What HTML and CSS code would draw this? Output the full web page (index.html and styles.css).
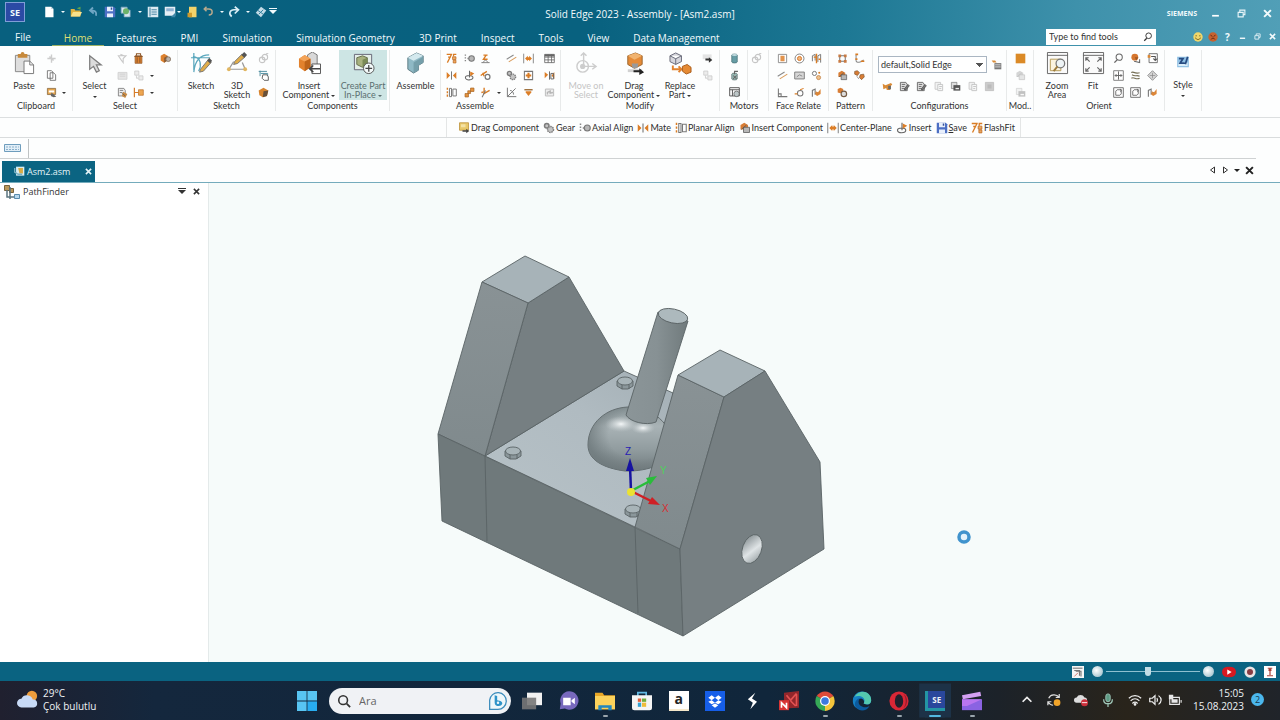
FILE: index.html
```html
<!DOCTYPE html>
<html lang="en">
<head>
<meta charset="utf-8">
<meta name="viewport" content="width=device-width, initial-scale=1">
<title>Solid Edge 2023 - Assembly - [Asm2.asm]</title>
<link rel="stylesheet" href="styles.css">
</head>
<body>
<svg class="sprite" aria-hidden="true">
  <!-- window and quick access -->
  <symbol id="new" viewBox="0 0 16 16"><path fill="#fff" d="M3 1h8l3 3v11H3z"/><path fill="#b9cdd8" d="M11 1v3h3z"/></symbol>
  <symbol id="open" viewBox="0 0 16 16"><path fill="#e2b23e" d="M1 4h5l1 2h7v8H1z"/><path fill="#f8e28c" d="M4 8h12l-3 6H1z"/><path fill="#63a64a" d="M9 3l5-2v4z"/></symbol>
  <symbol id="back" viewBox="0 0 16 16"><path fill="none" stroke="#6fa6c4" stroke-width="2.4" d="M12 13c1-5-1-7-6-7M8 2L4 6l5 4"/></symbol>
  <symbol id="save" viewBox="0 0 16 16"><path fill="#4c6fc4" d="M1 1h12l2 2v12H1z"/><path fill="#e8effb" d="M4 1h8v6H4zM4 10h8v5H4z"/><path fill="#35509c" d="M9 2h2v3H9z"/></symbol>
  <symbol id="copies" viewBox="0 0 16 16"><path fill="#d7e6ef" stroke="#7fa5bd" d="M1.500 1.500h8v8h-8zM5.500 5.500h8v9h-8z"/><circle cx="8" cy="7" r="4" fill="#6db26a"/></symbol>
  <symbol id="list" viewBox="0 0 16 16"><path fill="#dbeaf2" d="M1 1h14v14H1z"/><path stroke="#4d88a5" stroke-width="1.500" fill="none" d="M4 2v12M6 5h7M6 8h7M6 11h7"/></symbol>
  <symbol id="screen" viewBox="0 0 16 16"><path fill="#e5eef5" d="M1 1h14v12H1z"/><path fill="#8fb2d3" d="M3 3h10v4H3z"/><path fill="#3e86a8" d="M9 15l6-6v6z"/></symbol>
  <symbol id="note" viewBox="0 0 16 16"><path fill="#f3d36a" d="M4 1h10v14H4z"/><path fill="#cf9a2b" d="M2 9h6v6H2z"/></symbol>
  <symbol id="undo" viewBox="0 0 16 16"><path fill="none" stroke="#b9a98c" stroke-width="2" d="M3 4h6c6 0 6 8 0 8M6 1L3 4l3 3"/></symbol>
  <symbol id="redo" viewBox="0 0 16 16"><path fill="none" stroke="#d9eef6" stroke-width="2.200" d="M5 14C0 10 3 5 8 5h5M9 1l5 4-5 5"/></symbol>
  <symbol id="layers" viewBox="0 0 16 16"><path fill="#c3dbe6" d="M8 1l7 5-7 9-7-6z"/><path fill="none" stroke="#2f7f9c" stroke-width="1.300" d="M4 6l7 5M11 5l-6 6"/></symbol>
  <symbol id="min" viewBox="0 0 16 16"><path stroke="#fff" stroke-width="3" d="M2 12h12"/></symbol>
  <symbol id="restore" viewBox="0 0 16 16"><path fill="none" stroke="#e6f4f8" stroke-width="2" d="M5 5V2h9v8h-3M2 6h9v8H2z"/></symbol>
  <symbol id="close" viewBox="0 0 16 16"><path stroke="currentColor" stroke-width="3.500" d="M2 2l12 12M14 2L2 14"/></symbol>
  <symbol id="smile" viewBox="0 0 16 16"><circle cx="8" cy="8" r="7.500" fill="#f0d76b"/><path d="M5 5v2M11 5v2M4 9c1 4 7 4 8 0" fill="none" stroke="#6c5a22" stroke-width="1.500"/></symbol>
  <symbol id="frown" viewBox="0 0 16 16"><circle cx="8" cy="8" r="7.500" fill="#c6622f"/><path d="M4 5l3 2M12 5L9 7M5 12c1-3 5-3 6 0" fill="none" stroke="#612a12" stroke-width="1.500"/></symbol>
  <symbol id="find" viewBox="0 0 16 16"><circle cx="9" cy="6" r="4.500" fill="none" stroke="currentColor" stroke-width="1.500"/><path stroke="currentColor" stroke-width="2" d="M6 10l-4 4"/></symbol>
  <!-- large ribbon icons -->
  <symbol id="paste" viewBox="0 0 24 24"><path fill="#dedede" stroke="#888" d="M2.500 3.500h15v17h-15z"/><path fill="#c78a3c" d="M5 2h3a2 2 0 0 1 4 0h3v4H5z"/><path fill="#fff" stroke="#777" d="M11.500 9.500h6l4 4v9h-10z"/><path fill="none" stroke="#777" d="M17.500 9.500v4h4"/></symbol>
  <symbol id="cursor" viewBox="0 0 24 24"><path fill="#dcdcdc" stroke="#7d7d7d" stroke-width="1.300" d="M7 4v14l4-3 3 6 3-1.500-3-6h5z"/></symbol>
  <symbol id="sketch" viewBox="0 0 24 24"><path fill="none" stroke="#5aa7bd" stroke-width="1.300" d="M1 6h20M4 1v18M4 21C5 10 10 3 20 3M3 5c9 0 9 10 6 15"/><path fill="#e0ad4a" stroke="#777" d="M11 18l8-10 3 3-8 9-4 1z"/><path fill="#555" d="M18 9l2-3 3 3-2 3z"/></symbol>
  <symbol id="sketch3" viewBox="0 0 24 24"><path fill="none" stroke="#999" stroke-width="1.300" d="M3 18h17l-3-7M3 18l5-8"/><circle cx="3" cy="18" r="2" fill="#e1b661"/><circle cx="20" cy="18" r="2" fill="#e1b661"/><path fill="#e0ad4a" stroke="#777" d="M9 10l8-8 3 3-8 7-4 1z"/><path fill="#555" d="M16 3l3-3 3 3-3 3z"/></symbol>
  <symbol id="insert-comp" viewBox="0 0 24 24"><path fill="#d8d8d8" stroke="#777" d="M10 3l5-3 5 3v10l-5 3-5-3z"/><path fill="#e2822d" d="M1 7l6-4 6 4v9l-6 4-6-4z"/><path fill="#f4a459" d="M1 7l6-4 6 4-6 3z"/><path fill="#bd6419" d="M7 10l6-3v9l-6 4z"/><path fill="#fff" stroke="#555" d="M14.500 12.500h9v10h-9z"/><path fill="none" stroke="#444" stroke-width="1.500" d="M23 17.500H12M16 14l-4 3.500 4 3.500"/></symbol>
  <symbol id="create" viewBox="0 0 24 24"><path fill="#e5efe9" stroke="#667" d="M2.500 2.500h18v16h-18z"/><path fill="#a8b27f" stroke="#66704d" d="M5 6l6-2 5 2v7l-5 3-6-3z"/><path fill="#7a8a56" d="M11 8l5-2v7l-5 3z"/><circle cx="17.500" cy="17" r="5.500" fill="#f3fafa" stroke="#555"/><path stroke="#444" stroke-width="1.300" d="M14 17h7M17.500 13.500v7"/></symbol>
  <symbol id="assemble" viewBox="0 0 24 24"><path fill="#8fb9c5" stroke="#5d7b84" d="M4 6l9-5 7 3v7l-5 3v5l-5 3-6-4z"/><path fill="#d4e9ee" d="M4 6l9-5 7 3-10 5z"/><path fill="#759faa" d="M10 11l10-6v6l-5 3v5l-5 3z"/></symbol>
  <symbol id="move" viewBox="0 0 24 24"><g fill="none" stroke="#cdcdcd" stroke-width="1.500"><path d="M9 1v14h13M6 4l3-3 3 3M18 12l4 3-4 3"/><circle cx="8" cy="15" r="6"/><circle cx="8" cy="15" r="2" fill="#ccc"/></g></symbol>
  <symbol id="drag" viewBox="0 0 24 24"><path fill="#e58b38" stroke="#9a642d" d="M5 4l8-3 7 3v9l-8 4-7-4z"/><path fill="#f1b36f" d="M5 4l8-3 7 3-8 4z"/><path fill="#999" d="M9 12h7l-1 5h-5z"/><path fill="#d1d1d1" d="M5 18h15v3H5z"/><path fill="#222" d="M11 19h6v-2l5 4-5 3v-3h-6z"/></symbol>
  <symbol id="drag-fav" viewBox="0 0 16 16"><path fill="#e8c86a" stroke="#b98d33" d="M2 1h12v10H2z"/><path fill="#f4e2a4" d="M4 3h6v4H4z"/><path fill="#444" d="M6 11h5V9l4 3-4 3v-2H6z"/></symbol>
  <symbol id="replace" viewBox="0 0 24 24"><path fill="#d6d6dc" stroke="#676a78" d="M1 4l6-3 6 3v6l-6 3-6-3zM1 4l6 3 6-3M7 7v6"/><path fill="none" stroke="#e2822d" stroke-width="2" d="M4 14v4h8M10 15l3 3-3 3"/><path fill="#e58a34" stroke="#a85d1c" d="M14 15l5-2 4 3v5l-5 2-4-3z"/></symbol>
  <symbol id="zoomarea" viewBox="0 0 24 24"><path fill="#fafafa" stroke="#666" d="M1.500.5h21v22h-21zM1 3.500h22"/><path fill="#fbf3df" stroke="#b79b55" d="M4.500 7.500h11v12h-11z"/><circle cx="15" cy="12" r="4.500" fill="#eef4f6" stroke="#777" stroke-width="1.300"/><path stroke="#9d7b3c" stroke-width="2" d="M12 15l-4 5"/></symbol>
  <symbol id="fit" viewBox="0 0 24 24"><path fill="#fafafa" stroke="#666" d="M1.500.5h21v22h-21zM1 3.500h22"/><path fill="none" stroke="#666" stroke-width="1.200" d="M8 10L4 6M4 9V6h3M16 10l4-4M17 6h3v3M8 16l-4 4M4 17v3h3M16 16l4 4M17 20h3v-3"/></symbol>
  <symbol id="style" viewBox="0 0 24 24"><path fill="#8fc0e4" d="M2 3h20v18H2z"/><path fill="#dbeffa" d="M4 13h16v6H4z"/><path fill="none" stroke="#284c82" stroke-width="3" d="M5 6h7l-5 8h8M20 3l-4 13"/></symbol>
  <!-- small ribbon icons -->
  <symbol id="cut" viewBox="0 0 16 16"><path fill="none" stroke="#ccc" stroke-width="2" d="M8 2v12M2 8h12M5 5l6 6"/></symbol>
  <symbol id="copy" viewBox="0 0 16 16"><path fill="#fff" stroke="#666" stroke-width="1.200" d="M2 1h6l2 2v9H2zM6 4h5l3 3v8H6z"/></symbol>
  <symbol id="clip" viewBox="0 0 16 16"><path fill="#e4a54e" stroke="#7b5b33" d="M2 2h12v9H2z"/><path fill="#fff" d="M4 5h8v3H4z"/><path fill="#666" d="M8 8l7 6-4 1-4-2z"/></symbol>
  <symbol id="filter-off" viewBox="0 0 16 16"><path fill="none" stroke="#c9c9c9" stroke-width="1.600" d="M2 4h11L9 8v6L6 10zM5 2l5 2"/></symbol>
  <symbol id="box" viewBox="0 0 16 16"><path fill="#df8330" stroke="#8c572a" d="M3 4h10v11H3z"/><path fill="none" stroke="#8c572a" stroke-width="1.500" d="M5 4V1h6v3M2 5h12M6 6v8M10 6v8"/></symbol>
  <symbol id="parts" viewBox="0 0 16 16"><path fill="#dc812f" d="M1 4l5-3 5 3v7l-5 3-5-3z"/><path fill="#8a5c35" d="M6 7l5-3v7l-5 3z"/><circle cx="12" cy="9" r="3.500" fill="#b9b2aa" stroke="#7a624d"/></symbol>
  <symbol id="off-a" viewBox="0 0 16 16"><path fill="#e6e6e6" stroke="#c9c9c9" d="M1.500 3.500h13v10h-13zM4 6h8M4 9h8"/></symbol>
  <symbol id="off-b" viewBox="0 0 16 16"><path fill="#ececec" stroke="#c5c5c5" d="M2.500 1.500h6v6h-6zM8.500 8.500h6v6h-6zM5 8v4h3"/></symbol>
  <symbol id="doc-hand" viewBox="0 0 16 16"><path fill="#eee" stroke="#777" stroke-width="1.200" d="M2 2h8l2 3v8H2zM4 5h5M4 8h4"/><path fill="#c98b43" d="M9 7l6 3-3 6-5-3z"/><path stroke="#555" d="M7 9l5 4"/></symbol>
  <symbol id="cfg-edit" viewBox="0 0 16 16"><path fill="#ddd" stroke="#666" stroke-width="1.300" d="M2 2h8l2 3v9H2zM4 5h5M4 8h4M4 11h4"/><path fill="#777" stroke="#444" d="M8 11l5-6 2 2-5 6H8z"/></symbol>
  <symbol id="align-l" viewBox="0 0 16 16"><path fill="none" stroke="#d57b28" stroke-width="1.700" d="M2 1v14M2 8h6"/><path fill="#eda651" stroke="#b76b21" d="M8 4h7v8H8z"/></symbol>
  <symbol id="link-off" viewBox="0 0 16 16"><g fill="none" stroke="#c6c6c6" stroke-width="1.600"><circle cx="6" cy="10" r="4"/><circle cx="10" cy="6" r="4"/><path d="M12 1l3-1"/></g></symbol>
  <symbol id="sk-view" viewBox="0 0 16 16"><path fill="none" stroke="#4d8d9f" stroke-width="1.400" d="M1 2h12M3 1v8M4 5h10v8"/><path fill="#fff" stroke="#555" stroke-width="1.300" d="M7 7h6l2 3v5H9l-3-3z"/></symbol>
  <symbol id="sphere" viewBox="0 0 16 16"><path fill="#d6842e" d="M1 5l7-4 7 4-2 8-6 2-5-3z"/><path fill="#66503a" d="M8 6l7-1-2 8-6 2z"/></symbol>
  <symbol id="flash" viewBox="0 0 16 16"><path fill="none" stroke="#d97c24" stroke-width="1.800" d="M1 2h8M8 2L2 14M3 6h4M11 2h4M11 1v4"/><path fill="#efa85f" stroke="#b8651d" d="M9.500 5.500h5v4h-5zM10.500 10.500h4v4h-4z"/></symbol>
  <symbol id="mate" viewBox="0 0 16 16"><path fill="#dc7e27" d="M1 3l5 5-5 5zM15 3l-5 5 5 5z"/><path stroke="#777" stroke-width="1.500" d="M8 2v12"/></symbol>
  <symbol id="planar" viewBox="0 0 16 16"><path stroke="#d97c24" stroke-width="2" stroke-dasharray="3 2" d="M2 1v14"/><path fill="none" stroke="#777" stroke-width="1.400" d="M5 2h3v12H5zM10 3h5v10h-5z"/></symbol>
  <symbol id="axial" viewBox="0 0 16 16"><path stroke="#888" stroke-width="2" stroke-dasharray="2 2" d="M2 2v12M5 8h3"/><circle cx="11" cy="8" r="4" fill="#b7b7b7" stroke="#777" stroke-width="1.500"/></symbol>
  <symbol id="insert" viewBox="0 0 16 16"><path fill="none" stroke="#666" stroke-width="1.500" d="M8 1v10M2 11c0-4 11-4 11 0s-11 5-11 0"/><path fill="#dc7e27" d="M9 2l6 3-6 4z"/></symbol>
  <symbol id="connect" viewBox="0 0 16 16"><path fill="#e5943f" stroke="#a66524" d="M9.500 1.500h5v5h-5zM1.500 9.500h5v5h-5zM5.500 5.500h4v4h-4z"/></symbol>
  <symbol id="ground" viewBox="0 0 16 16"><path fill="none" stroke="#777" stroke-width="1.300" d="M2 14h12M4 14l4-4 4 4"/><path stroke="#d97c24" stroke-width="2" fill="none" d="M5 3h6M9 3L5 9h6"/></symbol>
  <symbol id="cam" viewBox="0 0 16 16"><path fill="none" stroke="#d97c24" stroke-width="2" d="M1 8l9-6M4 4l2 5"/><circle cx="11" cy="10" r="3.500" fill="#fff" stroke="#777" stroke-width="1.800"/></symbol>
  <symbol id="path" viewBox="0 0 16 16"><path fill="none" stroke="#d97c24" stroke-width="2" d="M6 1v6l-4 1M5 10l9-5"/><path stroke="#777" stroke-width="1.500" d="M3 15l5-10"/></symbol>
  <symbol id="parallel" viewBox="0 0 16 16"><path stroke="#888" stroke-width="1.500" d="M1 9l10-6"/><path stroke="#d99a58" stroke-width="1.500" d="M4 13l11-7"/></symbol>
  <symbol id="gear" viewBox="0 0 16 16"><g fill="#c4c4c4" stroke="#7c7c7c" stroke-width="2"><circle cx="5" cy="5" r="3"/><circle cx="10" cy="10" r="4" stroke-dasharray="2 1"/></g></symbol>
  <symbol id="angle" viewBox="0 0 16 16"><path fill="none" stroke="#777" stroke-width="1.400" d="M2 1v13h13M2 14L14 2M6 5c3 0 5 3 5 6"/></symbol>
  <symbol id="center" viewBox="0 0 16 16"><path fill="none" stroke="#888" stroke-width="1.400" d="M1 1v14M15 1v14"/><path fill="#dc7e27" d="M3 8l4-4v2h2V4l4 4-4 4v-2H7v2z"/></symbol>
  <symbol id="rigid" viewBox="0 0 16 16"><path fill="#fff" stroke="#777" stroke-width="1.500" d="M2 2h12v12H2z"/><path stroke="#d97c24" stroke-width="3" d="M8 4v8M4 8h8"/></symbol>
  <symbol id="tangent" viewBox="0 0 16 16"><path stroke="#9a6a35" stroke-width="2" d="M2 4h12"/><path fill="#dc7e27" d="M4 6h8v2l-4 5-4-5z"/></symbol>
  <symbol id="table" viewBox="0 0 16 16"><path fill="#fff" stroke="#666" stroke-width="1.200" d="M1 2h14v12H1zM1 6h14M1 10h14M6 2v12M11 2v12"/><path fill="#666" d="M1 2h14v3H1z"/></symbol>
  <symbol id="mate-doc" viewBox="0 0 16 16"><path fill="#dc7e27" d="M1 3l5 4-5 5zM15 3v10l-4-5z"/><path fill="none" stroke="#666" stroke-width="1.400" d="M8 2v12M10 5h4v8h-4z"/></symbol>
  <symbol id="run-off" viewBox="0 0 16 16"><path fill="#eee" stroke="#bbb" stroke-width="1.400" d="M2 3h12v10H2z"/><path fill="none" stroke="#b5b5b5" stroke-width="2" d="M5 11V8l4-2v3l4-1"/></symbol>
  <symbol id="hide" viewBox="0 0 16 16"><path fill="#e4e4e4" d="M1 2h13v7H1z"/><path fill="#333" d="M5 8h5V6l5 4-5 4v-3H5z"/></symbol>
  <symbol id="motor-a" viewBox="0 0 16 16"><path fill="#679da5" stroke="#416a70" d="M4 3c0-2 8-2 8 0v10c0 2-8 2-8 0z"/><ellipse cx="8" cy="3" rx="4" ry="1.500" fill="#c2dade"/></symbol>
  <symbol id="motor-b" viewBox="0 0 16 16"><path fill="#98bbb6" stroke="#5d6d6d" d="M4 6c0-2 8-2 8 0v7c0 2-8 2-8 0z"/><path fill="none" stroke="#666" stroke-width="1.500" d="M8 6V2h5M6 8l5 5M11 8l-5 5"/></symbol>
  <symbol id="motor-c" viewBox="0 0 16 16"><path fill="#fff" stroke="#555" stroke-width="1.400" d="M1 1h14v12H1zM1 4h14M5 4v9"/><circle cx="11" cy="10" r="4" fill="#bcc6c7" stroke="#555"/></symbol>
  <symbol id="square-r" viewBox="0 0 16 16"><path fill="#fff" stroke="#888" stroke-width="1.300" d="M2 2h12v12H2z"/><path fill="#e2934c" d="M5 4h6v8H5z"/></symbol>
  <symbol id="concentric" viewBox="0 0 16 16"><circle cx="8" cy="8" r="6.500" fill="#fff" stroke="#777" stroke-width="1.300"/><circle cx="8" cy="8" r="3" fill="#efb67d" stroke="#d7782a" stroke-width="1.400"/></symbol>
  <symbol id="sym" viewBox="0 0 16 16"><path fill="none" stroke="#777" stroke-width="1.400" d="M2 12V4l4-2v9M10 13V4l4-2v12"/><path stroke="#d97c24" stroke-width="2" d="M8 1v14M4 6h3M11 9h3"/></symbol>
  <symbol id="coplanar" viewBox="0 0 16 16"><path fill="#d6d6d6" stroke="#777" stroke-width="1.300" d="M1 3h14v10H1z"/><path fill="none" stroke="#888" stroke-width="1.400" d="M4 10l4-3 4 2"/></symbol>
  <symbol id="equal" viewBox="0 0 16 16"><circle cx="5" cy="5" r="3" fill="#fff" stroke="#777" stroke-width="1.400"/><circle cx="11" cy="11" r="3" fill="#efc28e" stroke="#bd7837"/><circle cx="12" cy="4" r="1.500" fill="#d97c24"/></symbol>
  <symbol id="perp" viewBox="0 0 16 16"><path fill="none" stroke="#777" stroke-width="1.500" d="M2 2v12h13M2 10h4v4"/></symbol>
  <symbol id="tan" viewBox="0 0 16 16"><circle cx="9" cy="9" r="4" fill="#fff" stroke="#777" stroke-width="1.500"/><path fill="none" stroke="#d97c24" stroke-width="1.500" d="M1 10h4M9 4l5-2"/></symbol>
  <symbol id="offset" viewBox="0 0 16 16"><path fill="none" stroke="#777" stroke-width="1.600" d="M2 14V5l4-2v7l4-2"/><path fill="#dc8638" d="M7 6l3 2 4-5v7l-5 3-3-2z"/></symbol>
  <symbol id="pattern" viewBox="0 0 16 16"><path fill="none" stroke="#777" stroke-width="1.500" d="M4 4h8v8H4z"/><path fill="#c87a42" d="M2 2h4v4H2zM10 2h4v4h-4zM2 10h4v4H2zM10 10h4v4h-4z"/></symbol>
  <symbol id="along" viewBox="0 0 16 16"><path fill="none" stroke="#888" stroke-width="1.500" d="M3 3v8c0 4 8 3 11-1"/><path fill="none" stroke="#d97c24" stroke-width="2.500" d="M2 2h4M2 9h3M10 12h5"/></symbol>
  <symbol id="mirror" viewBox="0 0 16 16"><path fill="#d87d35" d="M2 4l5-3 5 3v6H2z"/><path fill="#b7b7b7" stroke="#555" d="M6 7h8v7H6z"/><path stroke="#555" d="M3 10l7-6"/></symbol>
  <symbol id="dup" viewBox="0 0 16 16"><path fill="#d87d35" stroke="#80562f" d="M1 2l4-1 3 3-3 4-4-2zM9 7l5-1 1 4-4 4-3-3z"/><path stroke="#777" d="M4 9l3 4"/></symbol>
  <symbol id="adjust" viewBox="0 0 16 16"><path fill="#d87d35" d="M1 3l4-2 4 2v5L5 9 1 8z"/><circle cx="10" cy="10" r="4" fill="#ddd" stroke="#765c45" stroke-width="1.700"/></symbol>
  <symbol id="cfg" viewBox="0 0 16 16"><path fill="#ddd" stroke="#666" stroke-width="1.300" d="M3 2h8v10H3z"/><path fill="#eee" stroke="#555" stroke-width="1.300" d="M7 5h7v9H7zM9 8h4M9 11h3"/></symbol>
  <symbol id="cfg-key" viewBox="0 0 16 16"><path fill="#d98b37" d="M1 4l4 2 8-3 2 2-3 3v5H7l-1-3-4 2z"/><path fill="#666" d="M9 7h4v5H9z"/></symbol>
  <symbol id="cfg-save" viewBox="0 0 16 16"><path fill="#ddd" stroke="#777" d="M2 2h8v9H2z"/><path fill="#555" d="M5 6h10v8H5z"/><path fill="#eee" d="M8 10h5v2H8z"/></symbol>
  <symbol id="cfg-set" viewBox="0 0 16 16"><path fill="#d98b37" d="M1 2h5l2 3H3z"/><path fill="#777" d="M5 6h10v9H5z"/><path stroke="#fff" d="M6 8.500h8M6 11.500h8"/></symbol>
  <symbol id="block" viewBox="0 0 16 16"><path fill="#db8a27" d="M1 1h14v14H1z"/></symbol>
  <symbol id="block-off" viewBox="0 0 16 16"><path fill="#ccc" stroke="#b7b7b7" d="M2 2h12v12H2z"/><path fill="#bbb" d="M5 5h6v6H5z"/></symbol>
  <symbol id="view-a" viewBox="0 0 16 16"><path fill="#fff" stroke="#777" stroke-width="1.300" d="M1 1h14v14H1z"/><path stroke="#666" stroke-width="1.400" fill="none" d="M8 2v12M3 8h10M5 6L3 8l2 2M11 6l2 2-2 2"/></symbol>
  <symbol id="view-b" viewBox="0 0 16 16"><path fill="#fff" stroke="#666" stroke-width="1.300" d="M1 1h14v14H1z"/><path fill="none" stroke="#666" stroke-width="1.300" d="M4 6l2-2h6v6l-2 2H4zM10 3l2 1-1 3"/></symbol>
  <symbol id="spin" viewBox="0 0 16 16"><circle cx="7" cy="6" r="5" fill="#d6762e"/><path fill="#9c5926" d="M7 6h5l-3 5z"/><path fill="none" stroke="#666" stroke-width="1.500" d="M6 12l8 2V9"/></symbol>
  <symbol id="pan" viewBox="0 0 16 16"><path fill="#fff" stroke="#666" stroke-width="1.300" d="M3 1h12v13H3z"/><path fill="#dc8732" d="M1 3h4v4H1z"/><path fill="none" stroke="#555" stroke-width="1.500" d="M6 5h6v6M9 8l3 3 3-3"/></symbol>
  <symbol id="rotate" viewBox="0 0 16 16"><path fill="none" stroke="#766f55" stroke-width="1.700" d="M2 4c2-3 4 2 12 0M3 7c4 3 7 0 11 2M2 12c4-3 6 3 12 0"/></symbol>
  <symbol id="diamond" viewBox="0 0 16 16"><path fill="#d6d6d6" stroke="#8c8c8c" stroke-width="1.300" d="M8 1l7 7-7 7-7-7z"/><path stroke="#888" d="M8 4v8M4 8h8"/></symbol>
  <!-- status bar and taskbar -->
  <symbol id="thermo" viewBox="0 0 16 16"><path fill="#f5f5f5" d="M0 0h16v16H0z"/><path fill="#999" d="M1 2h13v2H1z"/><path fill="none" stroke="#777" stroke-width="1.500" d="M3 6h7v7M12 14V7H5"/><path stroke="#c75444" d="M3 14l5-5"/></symbol>
  <symbol id="play" viewBox="0 0 16 16"><path fill="#d71921" d="M0 8q0-6 8-6t8 6-8 6-8-6z"/><path fill="#fff" d="M6 5l5 3-5 3z"/></symbol>
  <symbol id="record" viewBox="0 0 16 16"><circle cx="8" cy="8" r="7.500" fill="#e9e5e5"/><circle cx="8" cy="8" r="4" fill="#883b42"/></symbol>
  <symbol id="upload" viewBox="0 0 16 16"><path fill="#fff" d="M0 0h16v16H0z"/><path stroke="#a84037" stroke-width="1.600" fill="none" d="M5 3h6M8 12V4M6 6l2-2 2 2M4 13h8"/></symbol>
  <symbol id="weather" viewBox="0 0 24 24"><circle cx="17" cy="8" r="6" fill="#ee9d3c"/><path fill="#c8daf6" d="M5 21a5 5 0 0 1 0-10 7 7 0 0 1 13 1 4.500 4.500 0 0 1 1 9z"/></symbol>
  <symbol id="windows" viewBox="0 0 24 24"><path fill="#58c5f3" d="M0 0h11.500v11.500H0zM12.500 0H24v11.500H12.500zM0 12.500h11.500V24H0z"/><path fill="#28adf0" d="M12.500 12.500H24V24H12.500z"/></symbol>
  <symbol id="bing" viewBox="0 0 24 24"><path fill="#eef7fa" stroke="#3a8bbb" stroke-width="1.500" d="M2 22V11a10 10 0 1 1 10 11z"/><path fill="#2e93c9" d="M8 5l3 1v5l4 1c4 2 2 6-2 6-3 0-5-1-5-4z"/><circle cx="12" cy="14" r="1.500" fill="#eef7fa"/></symbol>
  <symbol id="tasks" viewBox="0 0 24 24"><path fill="#f1f1f1" d="M6 2h18v15H6z"/><path fill="#777" opacity=".9" d="M0 8h17v14H0z"/></symbol>
  <symbol id="meet" viewBox="0 0 24 24"><path fill="#7769bd" d="M1 22l1-7a11 11 0 1 1 5 6z"/><path fill="#fff" d="M5 8h9v9H5zM15 11l4-3v8l-4-3z"/></symbol>
  <symbol id="folder" viewBox="0 0 24 24"><path fill="#e9a727" d="M0 2h9l2 3h13v17H0z"/><path fill="#fcd25b" d="M0 6h24v16H0z"/><path fill="#2386be" d="M4 23v-6h16v6h-4v-3H8v3z"/></symbol>
  <symbol id="store" viewBox="0 0 24 24"><path fill="none" stroke="#62b9e4" stroke-width="2" d="M7 7V2h10v5"/><path fill="#f5f5f5" d="M0 5h24v15q0 3-3 3H3q-3 0-3-3z"/><path fill="#e35c36" d="M7 9h4v4H7z"/><path fill="#70ac3c" d="M12 9h5v4h-5z"/><path fill="#35a3d5" d="M7 14h4v5H7z"/><path fill="#efbc39" d="M12 14h5v5h-5z"/></symbol>
  <symbol id="dropbox" viewBox="0 0 24 24"><path fill="#165ee8" d="M0 0h24v24H0z"/><path fill="#fff" d="M8 5l4 3-4 3-4-3zM16 5l4 3-4 3-4-3zM8 11l4 3 4-3 4 2-4 3-4-2-4 2-4-3zM8 17l4-2 4 2-4 3z"/></symbol>
  <symbol id="bolt" viewBox="0 0 24 24"><path fill="#fff" d="M16 2L7 10l6 4-3 8 8-9-6-4z"/></symbol>
  <symbol id="nitro" viewBox="0 0 24 24"><path fill="#92262b" d="M6 2l18-2v20l-18 1z"/><path stroke="#e35353" stroke-width="2" fill="none" d="M9 5l5 6 7-8M14 12l6 6M21 4v14"/><path fill="#d93434" d="M0 11h12v12H0z"/><path fill="none" stroke="#fff" stroke-width="2" d="M3 20v-6l6 6v-6"/></symbol>
  <symbol id="chrome" viewBox="0 0 24 24"><path fill="#df4b39" d="M12 12L2 6a12 12 0 0 1 20 0z"/><path fill="#f4c53b" d="M12 12l10-6a12 12 0 0 1-10 18z"/><path fill="#36a957" d="M12 12v12A12 12 0 0 1 2 6z"/><circle cx="12" cy="12" r="6" fill="#fff"/><circle cx="12" cy="12" r="4.500" fill="#3b79df"/></symbol>
  <symbol id="edge" viewBox="0 0 24 24"><path fill="#1580c5" d="M1 12a11 11 0 0 1 22-1c0 6-6 6-9 4 1-1 1-5-3-6-4 0-7 7 0 12-7 1-10-4-10-9z"/><path fill="#54c9ae" d="M3 7C9-3 23 0 23 11c0 5-5 6-9 4 4-6-4-11-11-8z"/><path fill="#0c5b9e" d="M8 12c-1 6 7 10 13 6-3 6-11 7-15 3-5-5-2-11 4-13-1 1-2 2-2 4z"/></symbol>
  <symbol id="opera" viewBox="0 0 24 24"><circle cx="12" cy="12" r="11.500" fill="#d92736"/><ellipse cx="12" cy="12" rx="5" ry="8" fill="#20202d"/><path fill="#991c2d" d="M17 3a11 11 0 0 1 0 18c4-5 4-13 0-18z"/></symbol>
  <symbol id="clapper" viewBox="0 0 24 24"><path fill="#d3a0f2" d="M0 5l22-4 1 5-22 4z"/><path fill="#8a63e2" d="M0 10h24v13H0z"/><path fill="#b975ef" d="M0 10h24L6 18H0z"/></symbol>
  <symbol id="chevron" viewBox="0 0 16 16"><path fill="none" stroke="#eee" stroke-width="2" d="M3 10l5-5 5 5"/></symbol>
  <symbol id="sync" viewBox="0 0 16 16"><path fill="none" stroke="#ddd" stroke-width="1.400" d="M2 6c2-5 9-5 12-1M14 1v4h-4M1 14v-4h4M1 10c2 3 4 4 6 4"/><circle cx="11.500" cy="11" r="3.800" fill="#f2a52a"/></symbol>
  <symbol id="cloud" viewBox="0 0 16 16"><path fill="#ddd" d="M3 11a3 3 0 0 1 0-6 5 5 0 0 1 9 0c4 0 4 6 0 6z"/><circle cx="12" cy="11" r="4" fill="#cb303b"/><path stroke="#fff" d="M9 11h6"/></symbol>
  <symbol id="mic" viewBox="0 0 16 16"><rect x="5.500" y="1" width="5" height="9" rx="2.500" fill="#5d9a83" stroke="#a1c9ba"/><path fill="none" stroke="#a1c9ba" stroke-width="1.400" d="M3 7c0 7 10 7 10 0M8 12v4"/></symbol>
  <symbol id="wifi" viewBox="0 0 16 16"><path fill="none" stroke="#eee" stroke-width="1.400" d="M1 6c4-4 10-4 14 0M3 9c3-3 7-3 10 0M5 12c2-2 4-2 6 0"/><circle cx="8" cy="13" r="1.500" fill="#eee"/></symbol>
  <symbol id="sound" viewBox="0 0 16 16"><path fill="none" stroke="#eee" stroke-width="1.400" d="M2 6h3l3-3v10l-3-3H2zM10 6c1 1 1 3 0 4M12 3c4 3 4 7 0 10"/></symbol>
  <symbol id="battery" viewBox="0 0 16 16"><path fill="none" stroke="#e7e7e7" stroke-width="1.300" d="M2 5h11v8H2zM15 8v3"/><path fill="#e7e7e7" d="M4 7h7v4H4zM1 2h5v5H1z"/></symbol>
</svg>

<div class="app">
<header class="head">
  <div class="titlebar">
    <div class="quick">
      <span class="logo">SE</span>
      <button class="qa w26" aria-label="New"><svg><use href="#new"/></svg><i class="caret"></i></button>
      <button class="qa" aria-label="Open"><svg><use href="#open"/></svg></button>
      <button class="qa" aria-label="Back"><svg><use href="#back"/></svg></button>
      <button class="qa" aria-label="Save"><svg><use href="#save"/></svg></button>
      <button class="qa w26" aria-label="Save as"><svg><use href="#copies"/></svg><i class="caret"></i></button>
      <button class="qa" aria-label="Properties"><svg><use href="#list"/></svg></button>
      <button class="qa w26 near" aria-label="Display"><svg><use href="#screen"/></svg><i class="caret"></i></button>
      <button class="qa" aria-label="Notes"><svg><use href="#note"/></svg></button>
      <button class="qa w26" aria-label="Undo"><svg><use href="#undo"/></svg><i class="caret"></i></button>
      <button class="qa w26" aria-label="Redo"><svg><use href="#redo"/></svg><i class="caret"></i></button>
      <button class="qa" aria-label="Update"><svg><use href="#layers"/></svg></button>
      <button class="more" aria-label="Customize"><i class="bar"></i><i class="caret big"></i></button>
    </div>
    <h1>Solid Edge 2023 - Assembly - [Asm2.asm]</h1>
    <div class="winctl">
      <b>SIEMENS</b>
      <button aria-label="Minimize"><svg><use href="#min"/></svg></button>
      <button aria-label="Restore"><svg><use href="#restore"/></svg></button>
      <button aria-label="Close"><svg><use href="#close"/></svg></button>
    </div>
  </div>
  <div class="tabrow">
    <nav class="tabs">
      <button class="file">File</button><button class="on">Home</button><button>Features</button><button>PMI</button><button>Simulation</button><button>Simulation Geometry</button><button>3D Print</button><button>Inspect</button><button>Tools</button><button>View</button><button>Data Management</button>
    </nav>
    <label class="search"><input type="text" placeholder="Type to find tools" aria-label="Type to find tools"><svg><use href="#find"/></svg></label>
    <div class="docctl">
      <button aria-label="Like"><svg class="face"><use href="#smile"/></svg></button>
      <button aria-label="Dislike"><svg class="face"><use href="#frown"/></svg></button>
      <button class="help">?</button>
      <button aria-label="Minimize document"><svg><use href="#min"/></svg></button>
      <button aria-label="Restore document"><svg><use href="#restore"/></svg></button>
      <button aria-label="Close document"><svg><use href="#close"/></svg></button>
    </div>
  </div>
</header>

<section class="ribbon">
  <div class="group clipboard"><div class="body">
    <button class="big"><svg><use href="#paste"/></svg><span>Paste</span></button>
    <div class="small"><svg><use href="#cut"/></svg><svg><use href="#copy"/></svg><svg><use href="#clip"/></svg><i></i><i></i><i class="caret"></i></div>
  </div><h2>Clipboard</h2></div>
  <div class="group select"><div class="body">
    <button class="big"><svg><use href="#cursor"/></svg><span>Select</span><i class="caret"></i></button>
    <div class="small"><svg><use href="#filter-off"/></svg><svg><use href="#off-a"/></svg><svg><use href="#doc-hand"/></svg><svg><use href="#box"/></svg><svg><use href="#off-b"/></svg><svg><use href="#align-l"/></svg><i></i><i class="caret"></i><i class="caret"></i><svg><use href="#parts"/></svg></div>
  </div><h2>Select</h2></div>
  <div class="group sketch"><div class="body">
    <button class="big"><svg><use href="#sketch"/></svg><span>Sketch</span></button>
    <button class="big"><svg><use href="#sketch3"/></svg><span>3D<br>Sketch</span></button>
    <div class="small"><svg><use href="#link-off"/></svg><svg><use href="#sk-view"/></svg><svg><use href="#sphere"/></svg></div>
  </div><h2>Sketch</h2></div>
  <div class="group components"><div class="body">
    <button class="big"><svg><use href="#insert-comp"/></svg><span>Insert<br>Component <i class="caret"></i></span></button>
    <button class="big hot"><svg><use href="#create"/></svg><span>Create Part<br>In-Place <i class="caret"></i></span></button>
  </div><h2>Components</h2></div>
  <div class="group assembly"><div class="body">
    <button class="big"><svg><use href="#assemble"/></svg><span>Assemble</span></button>
    <div class="small split"><svg><use href="#flash"/></svg><svg><use href="#mate"/></svg><svg><use href="#planar"/></svg><svg><use href="#axial"/></svg><svg><use href="#insert"/></svg><svg><use href="#connect"/></svg><svg><use href="#ground"/></svg><svg><use href="#cam"/></svg><svg><use href="#path"/></svg><i></i><i></i><i class="caret"></i><svg><use href="#parallel"/></svg><svg><use href="#gear"/></svg><svg><use href="#angle"/></svg><svg><use href="#center"/></svg><svg><use href="#rigid"/></svg><svg><use href="#tangent"/></svg><svg><use href="#table"/></svg><svg><use href="#mate-doc"/></svg><svg><use href="#run-off"/></svg></div>
  </div><h2>Assemble</h2></div>
  <div class="group modify"><div class="body">
    <button class="big" disabled><svg><use href="#move"/></svg><span>Move on<br>Select</span></button>
    <button class="big"><svg><use href="#drag"/></svg><span>Drag<br>Component <i class="caret"></i></span></button>
    <button class="big"><svg><use href="#replace"/></svg><span>Replace<br>Part <i class="caret"></i></span></button>
    <div class="small"><svg><use href="#hide"/></svg><svg><use href="#off-b"/></svg></div>
  </div><h2>Modify</h2></div>
  <div class="group motors"><div class="body">
    <div class="small"><svg><use href="#motor-a"/></svg><svg><use href="#motor-b"/></svg><svg><use href="#motor-c"/></svg></div>
    <div class="small split"><svg><use href="#link-off"/></svg></div>
  </div><h2>Motors</h2></div>
  <div class="group relate"><div class="body">
    <div class="small"><svg><use href="#square-r"/></svg><svg><use href="#parallel"/></svg><svg><use href="#perp"/></svg><svg><use href="#concentric"/></svg><svg><use href="#coplanar"/></svg><svg><use href="#tan"/></svg><svg><use href="#sym"/></svg><svg><use href="#equal"/></svg><svg><use href="#offset"/></svg></div>
  </div><h2>Face Relate</h2></div>
  <div class="group pattern"><div class="body">
    <div class="small"><svg><use href="#pattern"/></svg><svg><use href="#mirror"/></svg><svg><use href="#adjust"/></svg><svg><use href="#along"/></svg><svg><use href="#dup"/></svg></div>
  </div><h2>Pattern</h2></div>
  <div class="group config"><div class="body">
    <div class="combo"><select aria-label="Configuration"><option>default,Solid Edge</option></select><svg><use href="#cfg-set"/></svg></div>
    <div class="strip"><svg><use href="#cfg-key"/></svg><svg><use href="#cfg-edit"/></svg><svg><use href="#cfg-edit"/></svg><svg class="dim"><use href="#cfg"/></svg><svg><use href="#cfg-save"/></svg><svg class="dim"><use href="#cfg"/></svg><svg><use href="#block-off"/></svg></div>
  </div><h2>Configurations</h2></div>
  <div class="group modes"><div class="body">
    <div class="small"><svg><use href="#block"/></svg><svg class="dim"><use href="#mirror"/></svg><svg class="dim"><use href="#cfg-save"/></svg></div>
  </div><h2>Mod..</h2></div>
  <div class="group orient"><div class="body">
    <button class="big"><svg><use href="#zoomarea"/></svg><span>Zoom<br>Area</span></button>
    <button class="big"><svg><use href="#fit"/></svg><span>Fit</span></button>
    <div class="small"><svg class="ink"><use href="#find"/></svg><svg><use href="#view-a"/></svg><svg><use href="#view-b"/></svg><svg><use href="#spin"/></svg><svg><use href="#rotate"/></svg><svg><use href="#view-b"/></svg><svg><use href="#pan"/></svg><svg><use href="#diamond"/></svg><svg><use href="#offset"/></svg></div>
  </div><h2>Orient</h2></div>
  <div class="group style"><div class="body">
    <button class="big"><svg><use href="#style"/></svg><span>Style</span><i class="caret"></i></button>
  </div></div>
</section>

<div class="favbar"><div class="favs">
  <button><svg><use href="#drag-fav"/></svg>Drag Component</button>
  <button><svg><use href="#gear"/></svg>Gear</button>
  <button><svg><use href="#axial"/></svg>Axial Align</button>
  <button><svg><use href="#mate"/></svg>Mate</button>
  <button><svg><use href="#planar"/></svg>Planar Align</button>
  <button><svg><use href="#mirror"/></svg>Insert Component</button>
  <button><svg><use href="#center"/></svg>Center-Plane</button>
  <button><svg><use href="#insert"/></svg>Insert</button>
  <button><svg><use href="#save"/></svg><span><u>S</u>ave</span></button>
  <button><svg><use href="#flash"/></svg>FlashFit</button>
</div></div>

<div class="command"><span class="kbd"><svg viewBox="0 0 17 8"><path fill="#e1eef7" stroke="#6e9dbd" d="M.5.5h16v7H.5z"/><path stroke="#8bb0cb" stroke-dasharray="2 1" d="M2 3h13M2 5.500h13"/></svg></span><div class="prompt"></div></div>

<div class="doctabs">
  <button class="doctab"><svg viewBox="0 0 16 16"><path fill="#d9eef4" d="M3 1h12v13H3z"/><path fill="#d9ab45" d="M6 3h7v8H8z"/><path fill="none" stroke="#78b0c1" stroke-width="2" d="M1 3v6l5 3h6"/></svg><span>Asm2.asm</span><svg class="x"><use href="#close"/></svg></button>
  <div class="tabnav">
    <button aria-label="Previous"><svg viewBox="0 0 8 8"><path fill="#fff" stroke="#333" d="M5.500 1v6l-4-3z"/></svg></button>
    <button aria-label="Next"><svg viewBox="0 0 8 8"><path fill="#fff" stroke="#333" d="M2.500 1v6l4-3z"/></svg></button>
    <button aria-label="List"><i class="caret mid"></i></button>
    <button aria-label="Close tab"><svg class="x"><use href="#close"/></svg></button>
  </div>
</div>

<main class="work">
  <aside class="finder">
    <div class="finder-head">
      <svg class="tree" viewBox="0 0 16 16"><path fill="#b9975a" stroke="#77633d" d="M.5 1.500h5v5h-5zM5.500 4.500h4v4h-4z"/><path fill="none" stroke="#5c7580" stroke-width="1.500" d="M3 6v7h8M6 3v12"/><path fill="#b8d8ee" stroke="#598bac" d="M10.500 10.500h5v4h-5z"/></svg>
      <span>PathFinder</span>
      <button class="more" aria-label="Options"><i class="bar"></i><i class="caret big"></i></button>
      <button aria-label="Close panel"><svg class="x"><use href="#close"/></svg></button>
    </div>
  </aside>
  <div class="canvas">
    <svg viewBox="209 183 1071 479" role="img" aria-label="Assembly model">
      <defs>
        <linearGradient id="dome" x1="0" y1="0" x2="0" y2="1"><stop offset="0" stop-color="#8b979a"/><stop offset=".3" stop-color="#a9b3b6"/><stop offset=".65" stop-color="#929da0"/><stop offset="1" stop-color="#727c7f"/></linearGradient>
        <radialGradient id="glow"><stop offset="0" stop-color="#f4f7f8"/><stop offset="1" stop-color="#c3cbcd" stop-opacity="0"/></radialGradient>
        <radialGradient id="shade" cx="60%" cy="45%" r="60%"><stop offset=".6" stop-color="#6e797c" stop-opacity="0"/><stop offset="1" stop-color="#6e797c" stop-opacity=".8"/></radialGradient>
        <linearGradient id="rod"><stop offset="0" stop-color="#8b9598"/><stop offset=".5" stop-color="#879194"/><stop offset="1" stop-color="#707a7c"/></linearGradient>
        <linearGradient id="floor" x1="0" y1="1" x2="1" y2="0"><stop offset="0" stop-color="#b7c2c7"/><stop offset=".6" stop-color="#b0bbc1"/><stop offset="1" stop-color="#a2aeb4"/></linearGradient>
        <linearGradient id="slope" x1="0" y1="0" x2="0" y2="1"><stop offset="0" stop-color="#899295"/><stop offset="1" stop-color="#808a8d"/></linearGradient>
        <linearGradient id="hole" x1="0" y1="0" x2="1" y2="1"><stop offset="0" stop-color="#768083"/><stop offset=".55" stop-color="#dfe4e6"/><stop offset="1" stop-color="#8d9699"/></linearGradient>
        <g id="screw"><path fill="#8b979b" d="M-8-2v5l5 3h6l5-3v-5z"/><ellipse cx="0" cy="-2" rx="7.500" ry="4" fill="#a8b4b8"/><path fill="none" d="M-3 2v4M4 2v4"/></g>
      </defs>
      <g stroke="#5a6365" stroke-width=".9" stroke-linejoin="round">
        <path fill="url(#floor)" d="M485 456L624 371L673 393L690 500L635 527z"/>
        <path fill="#767f82" d="M528 303L569 277L624 371L485 456z"/>
        <path fill="#a7b3b8" d="M482 282L525 256L569 277L528 303z"/>
        <path fill="url(#slope)" d="M482 282L528 303L485 456L438 434z"/>
        <path fill="#6f797b" d="M438 434L680 549L683 636L442 521z"/>
        <path fill="none" d="M485 456L487 541M635 527L638 613"/>
        <use href="#screw" x="625" y="383"/><use href="#screw" x="513" y="453"/><use href="#screw" x="633" y="511"/>
        <path fill="url(#dome)" d="M588 445C588 423 606 408 628 407C653 407 672 424 674 448C674 462 648 472 625 471C603 468 588 460 588 445z"/>
      </g>
      <path fill="url(#shade)" d="M588 445C588 423 606 408 628 407C653 407 672 424 674 448C674 462 648 472 625 471C603 468 588 460 588 445z"/>
      <ellipse cx="621" cy="424" rx="16" ry="8" fill="url(#glow)"/><ellipse cx="643" cy="428" rx="12" ry="6" fill="url(#glow)"/>
      <g stroke="#5a6365" stroke-width=".9" stroke-linejoin="round">
        <path fill="url(#rod)" d="M658 312L626 415C630 422 646 426 656 422L688 321z"/>
        <ellipse cx="673" cy="316" rx="15" ry="7" transform="rotate(12 673 316)" fill="#adb9bd"/>
        <path fill="url(#slope)" d="M678 375L724 397L680 549L635 527z"/>
        <path fill="#a7b3b8" d="M678 375L720 350L765 371L724 397z"/>
        <path fill="#767f82" d="M724 397L765 371L820 462L824 549L683 636L680 549z"/>
        <ellipse cx="752" cy="549" rx="9.500" ry="15" transform="rotate(20 752 549)" fill="url(#hole)"/>
      </g>
      <path stroke="#1713a0" stroke-width="2.500" d="M631 491L630 466"/><path fill="#1713a0" d="M626 471l4-13 4 13z"/>
      <path stroke="#29bd3a" stroke-width="2.500" d="M631 491L650 481"/><path fill="#29bd3a" d="M646 478l11-2-7 9z"/>
      <path stroke="#cf2025" stroke-width="2.500" d="M631 491L651 501"/><path fill="#cf2025" d="M652 497l8 8-12-1z"/>
      <circle cx="631" cy="492" r="4" fill="#ebe232"/>
      <g class="axis"><text x="625" y="455" fill="#2820b4">Z</text><text x="660" y="474" fill="#4fd05a">Y</text><text x="662" y="512" fill="#d82d31">X</text></g>
      <circle cx="964" cy="537" r="5" fill="#e3f2fb" stroke="#4093cd" stroke-width="3.500"/>
    </svg>
  </div>
</main>

<footer class="status">
  <svg><use href="#thermo"/></svg>
  <button class="knob" aria-label="Zoom out"></button>
  <input type="range" min="0" max="100" value="44" aria-label="Zoom">
  <button class="knob" aria-label="Zoom in"></button>
  <svg class="wide"><use href="#play"/></svg><svg><use href="#record"/></svg><svg><use href="#upload"/></svg>
</footer>

<div class="taskbar">
  <button class="weather"><svg><use href="#weather"/></svg><span>29°C<br>Çok bulutlu</span></button>
  <div class="dock">
    <button class="start" aria-label="Start"><svg><use href="#windows"/></svg></button>
    <label class="ask"><svg class="lens" viewBox="0 0 16 16"><circle cx="7" cy="7" r="5" fill="none" stroke="#333" stroke-width="1.800"/><path stroke="#333" stroke-width="2" d="M11 11l4 4"/></svg><input type="text" placeholder="Ara" aria-label="Ara"><svg><use href="#bing"/></svg></label>
    <div class="apps">
      <button aria-label="Task view"><svg><use href="#tasks"/></svg></button>
      <button aria-label="Chat"><svg><use href="#meet"/></svg></button>
      <button class="run" aria-label="Files"><svg><use href="#folder"/></svg></button>
      <button aria-label="Store"><svg><use href="#store"/></svg></button>
      <button aria-label="Amazon"><span class="amz">a</span></button>
      <button aria-label="Dropbox"><svg><use href="#dropbox"/></svg></button>
      <button aria-label="Bolt"><svg><use href="#bolt"/></svg></button>
      <button aria-label="Nitro"><svg><use href="#nitro"/></svg></button>
      <button class="run" aria-label="Chrome"><svg><use href="#chrome"/></svg></button>
      <button aria-label="Edge"><svg><use href="#edge"/></svg></button>
      <button class="run" aria-label="Opera"><svg><use href="#opera"/></svg></button>
      <button class="run active"><span class="se">SE</span></button>
      <button class="run" aria-label="Video editor"><svg><use href="#clapper"/></svg></button>
    </div>
  </div>
  <div class="tray">
    <svg><use href="#chevron"/></svg><svg><use href="#sync"/></svg><svg><use href="#cloud"/></svg><svg><use href="#mic"/></svg>
    <div class="net"><svg><use href="#wifi"/></svg><svg><use href="#sound"/></svg><svg><use href="#battery"/></svg></div>
    <time>15:05<br>15.08.2023</time>
    <span class="badge">2</span>
  </div>
</div>
</div>
</body>
</html>
```
FILE: styles.css
```css
* { box-sizing: border-box; }
body { margin: 0; font-family: "Open Sans", "Noto Sans", sans-serif; font-size: 9px; color: #333; }
button, input, select { font: inherit; color: inherit; border: 0; padding: 0; margin: 0; background: none; }
button { display: flex; align-items: center; justify-content: center; white-space: nowrap; }
svg { display: block; flex: none; }
h1, h2 { margin: 0; font-weight: 400; }
.sprite { position: absolute; width: 0; height: 0; }
.app { min-height: 100vh; display: flex; flex-direction: column; background: #fdfefe; }
.caret { display: block; border: 2px solid transparent; border-top-color: currentColor; border-bottom: 0; width: 4px; height: 2px; }
.caret.mid { border-width: 3px 3px 0; width: 6px; height: 3px; }
.caret.big { border-width: 4px 4px 0; width: 8px; height: 4px; }
.bar { display: block; width: 8px; height: 1px; background: currentColor; }
.more { flex-direction: column; gap: 1px; }

/* header */
.head { background: linear-gradient(92deg, #08607f 0%, #08617f 46%, #1d7894 66%, #3e91ab 84%, #519fb7 100%); color: #f2fafc; }
.titlebar { display: grid; grid-template-columns: 1fr auto 1fr; align-items: center; height: 27px; }
h1 { font-size: 10px; line-height: 14px; }
.quick { display: flex; align-items: center; align-self: start; height: 24px; padding-left: 5px; }
.logo { width: 20px; height: 20px; margin-right: 16px; background: #2b4aa5; border: 1px solid #7f9ed6; font-size: 9px; font-weight: 700; line-height: 20px; text-align: center; }
.qa { width: 17px; height: 16px; }
.qa svg { width: 12px; height: 12px; }
.qa.w26 { width: 26px; gap: 6px; }
.qa.w26.near { width: 22px; gap: 1px; }
.winctl { display: flex; justify-content: flex-end; align-items: center; padding-right: 7px; }
.winctl b { font-size: 7px; margin-right: 5px; }
.winctl button { width: 26px; }
.winctl button:last-child { width: 12px; margin-left: 7px; }
.winctl svg { width: 9px; height: 9px; }
.tabrow { display: flex; align-items: center; height: 19px; }
.tabs { display: flex; flex: 1; height: 19px; font-size: 10px; }
.tabs button { height: 19px; padding: 3px 12px 0; border-bottom: 1px solid transparent; }
.tabs .file { padding: 1px 21px 0 15px; }
.tabs .on { color: #dfdf73; border-bottom-color: #a0b264; }
.search { display: flex; align-items: center; width: 110px; height: 16px; padding: 0 3px; margin-right: 34px; background: #fff; color: #333; }
.search, .ribbon, .favbar { font-family: Lato, "Open Sans", sans-serif; }
.search input { flex: 1; min-width: 0; }
.search input::placeholder { color: #333; opacity: 1; }
.search svg { width: 10px; height: 10px; }
.docctl { display: flex; align-items: center; }
.docctl button { width: 15px; }
.docctl svg { width: 7px; height: 7px; }
.docctl .face { width: 10px; height: 10px; }
.help { font-size: 10px; font-weight: 700; }

/* ribbon */
.ribbon { display: flex; height: 72px; padding-top: 4px; border-bottom: 1px solid #dcdfe0; }
.group { display: flex; flex-direction: column; flex: none; height: 61px; border-right: 1px solid #e8eaea; }
.body { display: flex; height: 50px; }
h2 { font-size: 9px; line-height: 11px; text-align: center; }
.big { flex: none; flex-direction: column; justify-content: flex-start; padding-top: 2px; height: 50px; line-height: 9px; }
.big svg { width: 23px; height: 23px; margin-bottom: 6px; }
.big > .caret { margin-top: 6px; }
.big span .caret { display: inline-block; vertical-align: middle; }
.big:disabled { color: #c4c4c4; }
.small { display: grid; flex: none; grid-auto-flow: column; grid-template-rows: repeat(3, 17px); grid-auto-columns: 17px; place-items: center; }
.small svg, .combo svg, .strip svg { width: 11px; height: 11px; }
.dim { opacity: .35; filter: grayscale(1); }
.ink { color: #666; }
.clipboard { width: 73px; }
.clipboard .body { padding-left: 5px; }
.clipboard .big { width: 38px; }
.clipboard .small { grid-template-columns: 16px 9px; }
.select { width: 105px; }
.select .body { padding-left: 2px; }
.select .big { width: 39px; }
.select .small { grid-template-columns: 16px 16px 12px 14px; }
.sketch { width: 98px; }
.sketch .body { padding-left: 5px; }
.sketch .big { width: 36px; }
.components { width: 114px; }
.components .body { padding-left: 6px; }
.components .big { width: 54px; }
.components .hot { width: 48px; margin-left: 3px; background: #cde5e4; color: #5b6f70; }
.assembly { width: 171px; }
.assembly .body { padding-left: 1px; }
.assembly .big { width: 49px; }
.split { border-left: 1px solid #e8eaea; }
.assembly .small { grid-template-columns: 20px 16px 17px 9px 17px 17px 24px; }
.modify { width: 159px; }
.modify .body { padding-left: 3px; }
.modify .big { width: 44px; }
.modify .big:nth-child(2) { width: 52px; }
.modify .big:nth-child(3) { width: 40px; }
.modify .small { grid-auto-columns: 14px; }
.motors { width: 49px; }
.motors .body { padding-left: 1px; }
.motors .small { grid-auto-columns: 26px; }
.motors .split { grid-auto-columns: 17px; }
.relate { width: 60px; }
.relate .body, .pattern .body, .config .body { padding-left: 5px; }
.pattern { width: 44px; }
.config { width: 134px; }
.config .body { flex-direction: column; }
.combo { display: flex; align-items: center; gap: 4px; margin-top: 6px; }
.combo select { appearance: none; width: 109px; height: 17px; padding: 0 2px; border: 1px solid #aab6c2; border-radius: 0; color: #333; background: linear-gradient(225deg, #555 50%, transparent 50%) right 6px center / 4px 4px no-repeat, linear-gradient(135deg, #555 50%, transparent 50%) right 2px center / 4px 4px no-repeat, #fff; }
.strip { display: flex; gap: 6px; padding: 8px 4px 0; }
.modes { width: 27px; }
.modes .small { grid-auto-columns: 26px; }
.orient { width: 131px; }
.orient .body { padding-left: 4px; }
.orient .big { width: 38px; }
.orient .big + .big { width: 34px; }
.style { width: 37px; }
.style .big { width: 36px; padding-top: 5px; }
.style .big svg { width: 14px; height: 14px; margin: 0 0 11px; }

/* favourites, prompt, document tabs */
.favbar { display: flex; height: 20px; padding-left: 446px; border-bottom: 1px solid #d9dcdd; }
.favs { display: flex; align-items: center; gap: 4px; padding: 0 5px 0 11px; border: solid #e4e6e6; border-width: 0 1px; color: #2d2d2d; }
.favs button { gap: 1px; }
.favs svg { width: 12px; height: 12px; }
.command { display: flex; align-items: center; height: 21px; margin-right: 24px; border-bottom: 1px solid #cfd2d3; }
.kbd { width: 28px; padding-left: 4px; }
.kbd svg { width: 17px; height: 8px; }
.prompt { flex: 1; height: 19px; border-left: 1px solid #bfc3c4; }
.doctabs { display: flex; justify-content: space-between; align-items: flex-end; height: 24px; padding-left: 2px; border-bottom: 1px solid #74abbc; }
.doctab { width: 93px; height: 21px; gap: 2px; padding: 0 3px 0 12px; background: #0b6482; color: #e6f4f8; font-size: 9px; }
.doctab svg { width: 11px; height: 11px; }
.doctab span { flex: 1; text-align: left; }
svg.x, .doctab svg.x { width: 7px; height: 7px; }
.tabnav { display: flex; align-items: center; gap: 4px; height: 24px; padding-right: 27px; color: #222; }
.tabnav button { width: 8px; }
.tabnav svg { width: 8px; height: 8px; }
.tabnav svg.x { width: 9px; height: 9px; }

/* workspace */
.work { display: flex; flex: 1; min-height: 0; }
.finder { width: 209px; flex: none; background: #fff; border-right: 1px solid #e4eaea; }
.finder-head { display: flex; align-items: center; gap: 7px; height: 17px; padding: 0 8px 0 4px; font-size: 9px; }
.finder-head span { flex: 1; margin-left: -4px; }
.tree { width: 16px; height: 16px; }
.canvas { flex: 1; min-width: 0; display: flex; background: #f6fbfa; }
.canvas svg { width: 100%; height: 100%; }
.axis { font-family: "Liberation Sans", sans-serif; font-size: 10px; }

/* status bar */
.status { display: flex; align-items: center; justify-content: flex-end; gap: 8px; height: 19px; padding-right: 4px; background: #0a6381; }
.status svg { width: 12px; height: 12px; }
.status .wide { width: 14px; height: 14px; }
.knob { width: 11px; height: 11px; border-radius: 50%; background: radial-gradient(circle at 40% 40%, #fff, #8db3c1); }
.status input { appearance: none; width: 94px; height: 12px; margin: 0 -5px; background: linear-gradient(#8fc0d0, #8fc0d0) center / 100% 1px no-repeat; }
.status input::-webkit-slider-thumb { appearance: none; width: 6px; height: 9px; background: #c3dde6; border-radius: 0 0 3px 3px; }

/* taskbar */
.taskbar { display: flex; align-items: center; height: 39px; background: linear-gradient(90deg, #20202f, #14273d 12%, #10263b 60%, #1c2229 78%, #29241b 88%, #20242a); color: #eef2f5; font-size: 10px; }
.weather { flex: none; width: 297px; height: 39px; justify-content: flex-start; gap: 5px; padding: 0 0 2px 17px; line-height: 13px; text-align: left; }
.weather svg { width: 21px; height: 21px; }
.dock { display: flex; align-items: center; flex: none; }
.dock svg { width: 20px; height: 20px; }
.ask { display: flex; align-items: center; gap: 8px; width: 182px; height: 26px; margin: 0 11px 0 12px; padding: 0 3px 0 8px; background: #f0f2f5; border-radius: 13px; color: #555; font-size: 11px; }
.dock .lens { width: 14px; height: 14px; }
.ask input { flex: 1; min-width: 0; }
.ask input::placeholder { color: #666; opacity: 1; }
.apps { display: flex; justify-content: space-between; width: 460px; }
.apps button { position: relative; width: 20px; height: 34px; }
.run::after { content: ""; position: absolute; left: 8px; bottom: 1px; width: 5px; height: 2px; border-radius: 1px; background: #9aa5ad; }
.active { box-shadow: 0 0 0 6px #1d3247; clip-path: inset(0 -6px); background: #1d3247; }
.active::after { left: 4px; width: 12px; background: #54b8df; }
.amz { width: 20px; height: 20px; background: #fff; color: #222; font-size: 14px; font-weight: 700; line-height: 16px; border-bottom: 2px solid #f5e8cb; }
.se { width: 20px; height: 20px; background: #29479c; border: solid #2395a4; border-width: 0 0 3px 3px; font-size: 8px; font-weight: 700; line-height: 18px; }
.tray { display: flex; align-items: center; justify-content: flex-end; gap: 13px; flex: 1; padding: 0 16px 2px 0; }
.tray > svg { width: 14px; height: 14px; }
.net { display: flex; gap: 6px; }
.net svg { width: 14px; height: 14px; }
time { text-align: right; line-height: 13px; margin: 0 -6px 0 -2px; }
.badge { width: 13px; height: 13px; border-radius: 50%; background: #4bb7ed; color: #17384b; font-size: 9px; line-height: 13px; text-align: center; }
```
